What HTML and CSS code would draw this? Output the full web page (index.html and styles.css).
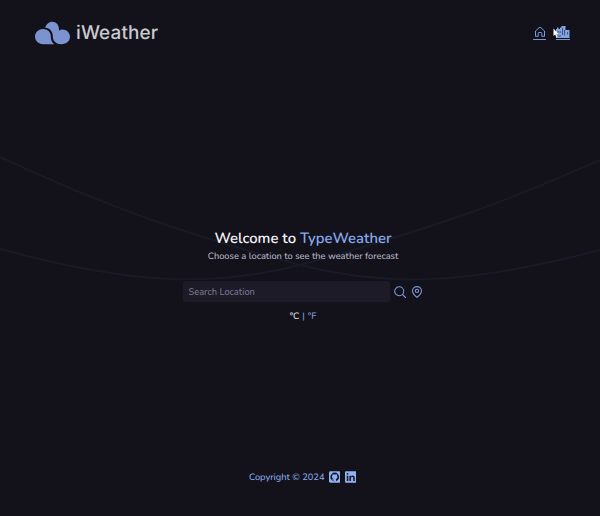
FILE: index.html
```html
<!DOCTYPE html>
<html lang="en">
<head>
<meta charset="utf-8">
<title>iWeather</title>
<link rel="stylesheet" href="styles.css">
</head>
<body>
<svg class="waves" viewBox="0 0 600 516" aria-hidden="true">
  <path d="M0 157C100 204 180 233 300 265C390 288 470 284 600 250"/>
  <path d="M600 160C500 205 420 232 300 265C210 288 130 284 0 249"/>
</svg>
<div class="page">
  <header class="header">
    <a class="brand">
      <svg class="brand-logo" viewBox="0 0 36 24">
        <path d="M20 23.500H8.200C3.400 23.500 0 20 0 15.700C0 11.200 4 8 8.300 8C13.500 8 16.300 11.800 16.300 16C16.300 19.500 17.400 22 20 23.500Z"/>
        <path d="M10.500 6.700C11.500 3 14.400 0.500 17.600 0.500C22 0.500 24.700 3.900 24.700 8.500V9.700C25.800 8.900 27 8.500 28.300 8.500C32.400 8.500 36 11.800 36 15.900C36 20.300 32.300 23.500 27.300 23.500C21.600 23.500 18.300 20 18.300 15.500C18.300 10.700 15.500 7 10.500 6.700Z"/>
      </svg>
      <span class="brand-name">iWeather</span>
    </a>
    <nav class="nav">
      <a class="nav-link nav-home">
        <svg viewBox="0 0 12 12"><path d="M1.500 10.300V5L6 1L10.500 5V10.300H7.800V7.300Q7.800 6.500 7 6.500H5Q4.200 6.500 4.200 7.300V10.300Z"/></svg>
      </a>
      <a class="nav-link nav-city">
        <svg viewBox="0 0 14 12"><path class="city" d="M0 12V3H1V1.500H2.500V3H4V1.500H5.500V0H9.500V4H13.500V12Z"/><path class="windows" d="M2 5V7M4.200 5V7M6.500 2V9M8.500 4V9.500M11.500 6V8.500M1.500 10H5"/></svg>
      </a>
      <svg class="cursor" viewBox="0 0 6 10"><path d="M0.500 0.500V8L2.200 6.600L3.400 9.400L4.600 8.800L3.500 6H5.600Z"/></svg>
    </nav>
  </header>
  <main class="main">
    <h1 class="title">Welcome to <span>TypeWeather</span></h1>
    <p class="subtitle">Choose a location to see the weather forecast</p>
    <form class="search">
      <input class="search-input" type="text" placeholder="Search Location">
      <svg class="search-icon" viewBox="0 0 12 12"><circle cx="5.200" cy="5.200" r="4.500"/><path d="M8.400 8.400L11.500 11.500"/></svg>
      <svg class="pin-icon" viewBox="0 0 12 12"><path d="M6 11.400C3.500 9.300 1.500 7.300 1.500 4.900A4.500 4.300 0 0 1 10.500 4.900C10.500 7.300 8.500 9.300 6 11.400Z"/><circle cx="6" cy="4.900" r="1.600"/></svg>
    </form>
    <div class="units"><span class="active">°C</span><span>|</span><span>°F</span></div>
  </main>
  <footer class="footer">
    <span class="copyright">Copyright © 2024</span>
    <svg class="social" viewBox="0 0 12 12"><rect width="12" height="12" rx="1.500"/><circle class="cut" cx="6" cy="6" r="4.600"/><path d="M4.800 11V9.400C3.600 9.600 3.300 8.900 2.900 8.300C3.700 8.200 3.900 8.900 4.800 8.600L5 8.100C3.800 7.800 3.200 7.100 3.200 5.800C3.200 5.200 3.400 4.800 3.700 4.400C3.500 3.900 3.500 3.500 3.700 3C4.200 3 4.600 3.200 5 3.500Q6 3.300 7 3.500C7.400 3.200 7.800 3 8.300 3C8.500 3.500 8.500 3.900 8.300 4.400C8.600 4.800 8.800 5.200 8.800 5.800C8.800 7.100 8.200 7.800 7 8.100Q7.300 8.400 7.300 9V11Z"/></svg>
    <svg class="social" viewBox="0 0 12 12"><rect width="12" height="12" rx="1"/><path class="cut" d="M1.800 4.600H3.500V10.200H1.800ZM4.600 4.600H6.200V5.400C6.600 4.800 7.200 4.400 8 4.400C9.700 4.400 10.200 5.500 10.200 7.100V10.200H8.500V7.400C8.500 6.500 8.300 5.900 7.500 5.900C6.600 5.900 6.300 6.500 6.300 7.400V10.200H4.600Z"/><circle class="cut" cx="2.650" cy="2.700" r="1"/></svg>
  </footer>
</div>
</body>
</html>
```

FILE: styles.css
```css
* { box-sizing: border-box; }
body {
  margin: 0;
  background: #131119;
  color: #86a9ec;
  font-family: "Nunito", "Open Sans", sans-serif;
  font-size: 9.250px;
  font-weight: 500;
  text-rendering: geometricPrecision;
}
svg { display: block; flex: none; }
.waves {
  position: absolute;
  inset: 0;
  width: 600px;
  height: 516px;
  fill: none;
  stroke: #181a28;
  stroke-width: 2;
}
.page {
  position: relative;
  height: 516px;
  padding: 20px 30px 32px 35px;
  display: flex;
  flex-direction: column;
}
.header { display: flex; justify-content: space-between; height: 26px; align-items: center; }
.brand { display: flex; align-items: center; gap: 6px; }
.brand-logo { width: 35px; height: 24px; fill: #7b93d1; }
.brand-name {
  font: 500 19px/24px Inter, sans-serif;
  letter-spacing: 0.100px;
  color: #c9c9d0;
}
.nav { position: relative; display: flex; gap: 10px; margin-top: -1px; }
.nav-link { height: 14px; border-bottom: 1px solid #7895d2; }
.nav-home { width: 13px; display: flex; justify-content: center; }
.nav-home svg { width: 12px; height: 12px; fill: none; stroke: #7f9bdc; stroke-width: 1; stroke-linejoin: round; }
.nav-city { width: 14px; }
.nav-city svg { width: 14px; height: 12px; }
.city { fill: #83a2e4; }
.windows { fill: none; stroke: #35415f; stroke-width: 0.800; }
.cursor { position: absolute; left: 20px; top: 2px; width: 6px; height: 10px; fill: #fff; }
.main { margin-top: 184px; margin-left: 148px; width: 240px; }
.title {
  margin: 0;
  width: 240px;
  text-align: center;
  font-size: 14.850px;
  line-height: 18px;
  font-weight: 600;
  color: #f4f4f8;
}
.title span { color: #86a8ed; }
.subtitle {
  margin: 1px 0 0;
  text-align: center;
  line-height: 16px;
  color: #b4b4c8;
}
.search { display: flex; align-items: center; margin: 16px 0 0; }
.search-input {
  width: 207px;
  height: 21px;
  padding: 0 5px 0 5.500px;
  border: 0;
  border-radius: 3px;
  background: #1e1b28;
  color: #bfbfd4;
  font: inherit;
}
.search-input::placeholder { color: #79778e; opacity: 1; }
.search svg { fill: none; stroke: #7d99d9; stroke-width: 1.100; stroke-linecap: round; }
.search-icon { width: 12px; height: 12px; margin-left: 4px; }
.pin-icon { width: 12px; height: 12px; margin-left: 5px; }
.units { display: flex; justify-content: center; gap: 3px; margin-top: 8px; line-height: 14px; color: #7e9ee5; }
.units .active { color: #e3e3eb; }
.footer { display: flex; align-items: center; gap: 4.500px; height: 14px; margin: auto 0 0 214px; }
.copyright { padding-top: 2px; line-height: 14px; }
.social { width: 11.500px; height: 12px; fill: #91b1f3; }
.social .cut { fill: #171828; }
```
